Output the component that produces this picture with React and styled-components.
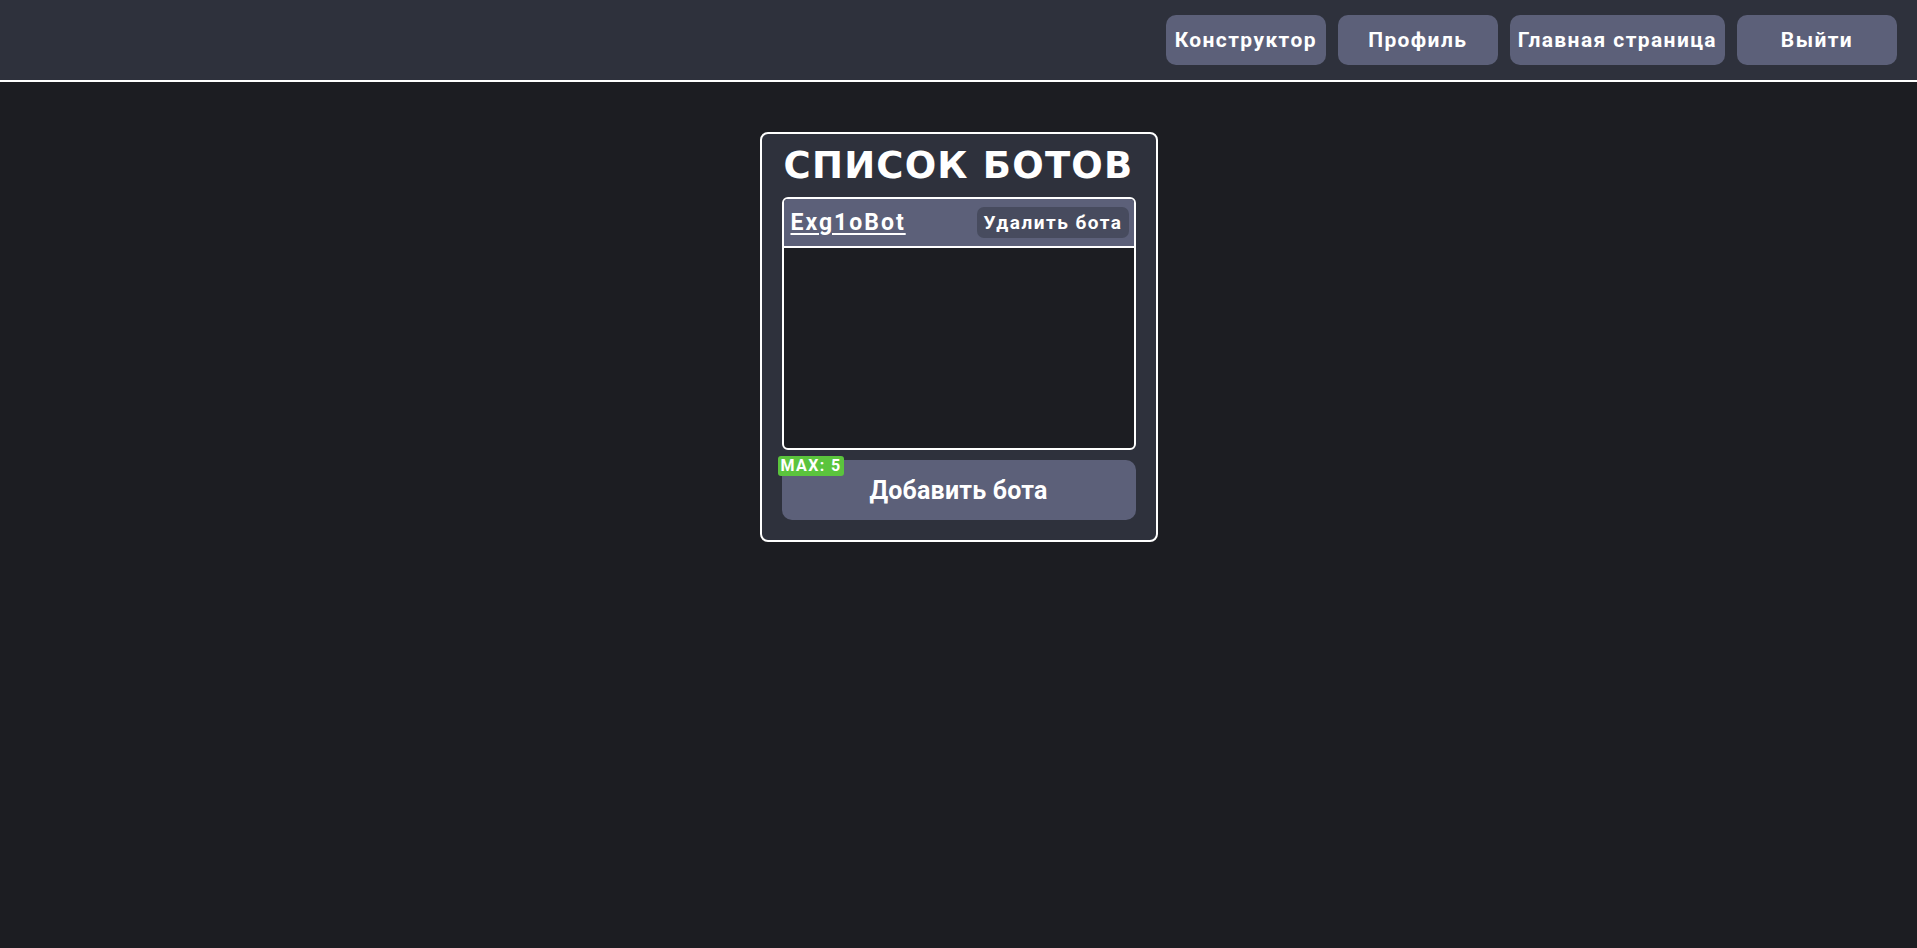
import React from 'react'
import styled, { createGlobalStyle } from 'styled-components'

const GlobalStyle = createGlobalStyle`
    html, body {
        margin: 0;
        padding: 0;
        background-color: #1c1d22;
        font-family: Roboto, "Noto Sans", sans-serif;
        color: white;
    }
`

const Page = styled.div`
    min-height: 100vh;
    background-color: #1c1d22;
`

const Header = styled.header`
    height: 80px;
    background-color: #2e313c;
    border-bottom: 2px solid white;
    display: flex;
    justify-content: flex-end;
    align-items: center;
    gap: 12px;
    padding: 0 20px;
`

const NavButton = styled.button`
    min-width: 160px;
    height: 50px;
    padding: 0 8px;
    border: none;
    border-radius: 10px;
    background-color: #5c6079;
    color: white;
    font-family: Roboto, sans-serif;
    font-weight: 700;
    font-size: 21px;
    letter-spacing: 1.4px;
    cursor: pointer;
`

const Main = styled.main`
    display: flex;
    justify-content: center;
    padding-top: 50px;
`

const Card = styled.div`
    width: 354px;
    padding: 10px 20px 20px;
    background-color: #2e313c;
    border: 2px solid white;
    border-radius: 8px;
    display: flex;
    flex-direction: column;
    gap: 10px;
`

const Title = styled.h1`
    margin: 0;
    text-align: center;
    font-family: "DejaVu Sans", Roboto, sans-serif;
    font-size: 37px;
    font-weight: 700;
    letter-spacing: 1.2px;
    line-height: 43px;
    white-space: nowrap;
`

const List = styled.div`
    height: 249px;
    border: 2px solid white;
    border-radius: 6px;
    background-color: #1c1d22;
    overflow: hidden;
`

const BotRow = styled.div`
    height: 47px;
    padding: 0 5px 0 7px;
    background-color: #5c6079;
    border-bottom: 2px solid white;
    display: flex;
    align-items: center;
    justify-content: space-between;
`

const BotName = styled.a`
    color: white;
    font-size: 23px;
    font-weight: 700;
    letter-spacing: 2px;
    text-decoration: underline;
    text-underline-offset: 3px;
    cursor: pointer;
`

const DeleteButton = styled.button`
    height: 31px;
    padding: 0 6px 0 7px;
    border: none;
    border-radius: 7px;
    background-color: #474b5e;
    color: white;
    font-family: Roboto, sans-serif;
    font-size: 19px;
    font-weight: 700;
    letter-spacing: 1.5px;
    cursor: pointer;
`

const AddWrap = styled.div`
    position: relative;
`

const AddButton = styled.button`
    width: 100%;
    height: 60px;
    border: none;
    border-radius: 10px;
    background-color: #5c6079;
    color: white;
    font-family: Roboto, sans-serif;
    font-size: 25px;
    font-weight: 700;
    letter-spacing: 0.2px;
    cursor: pointer;
`

const Badge = styled.span`
    position: absolute;
    top: -4px;
    left: -4px;
    padding: 0 2px 0 3px;
    border-radius: 3px;
    background-color: #5bc43d;
    color: white;
    font-size: 16px;
    font-weight: 700;
    letter-spacing: 1.4px;
    line-height: 20px;
`

const bots = ['Exg1oBot']

const App = () => {
    return (
        <Page>
            <GlobalStyle />
            <Header>
                <NavButton>Конструктор</NavButton>
                <NavButton>Профиль</NavButton>
                <NavButton>Главная страница</NavButton>
                <NavButton>Выйти</NavButton>
            </Header>
            <Main>
                <Card>
                    <Title>СПИСОК БОТОВ</Title>
                    <List>
                        {bots.map((name) => (
                            <BotRow key={name}>
                                <BotName>{name}</BotName>
                                <DeleteButton>Удалить бота</DeleteButton>
                            </BotRow>
                        ))}
                    </List>
                    <AddWrap>
                        <Badge>MAX: 5</Badge>
                        <AddButton>Добавить бота</AddButton>
                    </AddWrap>
                </Card>
            </Main>
        </Page>
    )
}

export default App
